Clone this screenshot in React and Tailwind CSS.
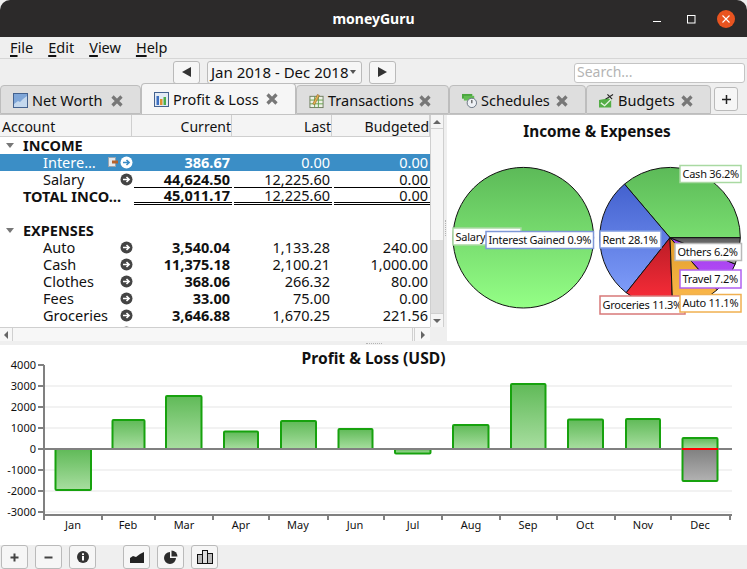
import React from 'react';

const FONT = '"Noto Sans", sans-serif';

const months = [
  ['Jan', 73], ['Feb', 128], ['Mar', 184], ['Apr', 241], ['May', 298], ['Jun', 355],
  ['Jul', 413], ['Aug', 471], ['Sep', 528], ['Oct', 585], ['Nov', 643], ['Dec', 700],
];
const xTicks = [44, 102, 155, 213, 269, 328, 384, 442, 500, 557, 615, 671, 730];
const yTicks = [[4000, 365], [3000, 386], [2000, 407], [1000, 428], [0, 449], [-1000, 470], [-2000, 491], [-3000, 512]];
const bars = [
  [55.5, 91, 449, 490], [112.5, 144.5, 420, 449], [166, 201.5, 396, 449], [224, 258, 431.5, 449],
  [281, 316, 421, 449], [338.5, 372.5, 429, 449], [395, 430.5, 449, 453.5], [453, 488.5, 425, 449],
  [511, 545.5, 384, 449], [568, 603, 419.5, 449], [626, 660, 419, 449],
];

const rows = [
  { type: 'group', name: 'INCOME' },
  { name: 'Intere…', cur: '386.67', last: '0.00', bud: '0.00', selected: true },
  { name: 'Salary', cur: '44,624.50', last: '12,225.60', bud: '0.00', line: 'single' },
  { type: 'total', name: 'TOTAL INCO…', cur: '45,011.17', last: '12,225.60', bud: '0.00', line: 'double' },
  { type: 'blank' },
  { type: 'group', name: 'EXPENSES' },
  { name: 'Auto', cur: '3,540.04', last: '1,133.28', bud: '240.00' },
  { name: 'Cash', cur: '11,375.18', last: '2,100.21', bud: '1,000.00' },
  { name: 'Clothes', cur: '368.06', last: '266.32', bud: '80.00' },
  { name: 'Fees', cur: '33.00', last: '75.00', bud: '0.00' },
  { name: 'Groceries', cur: '3,646.88', last: '1,670.25', bud: '221.56' },
];

const pieSlices = [
  ['url(#pGreen)', 0, 130.3], ['url(#pBlue)', 130.3, 231.5], ['url(#pRed)', 231.5, 272.2],
  ['url(#pOrange)', 272.2, 312.2], ['url(#pPurple)', 312.2, 338], ['url(#pGray)', 338, 360],
];

const pieLabels = [
  ['Salary', 453, 228, 68, 17, '#a9d9a2'],
  ['Interest Gained 0.9%', 486, 231.5, 107.5, 17, '#7f98d8'],
  ['Rent 28.1%', 600, 231, 61, 17, '#7f9be0'],
  ['Cash 36.2%', 680, 165.5, 61, 17, '#a9d9a2'],
  ['Others 6.2%', 675, 243.5, 66.5, 17, '#b8b8b8'],
  ['Travel 7.2%', 680, 270, 61, 18, '#b060f0'],
  ['Groceries 11.3%', 600, 296, 85, 18, '#d87878'],
  ['Auto 11.1%', 680, 294.5, 61, 17.5, '#f0b050'],
];

function slicePath(cx, cy, r, from, to) {
  const p = (a) => [cx + r * Math.cos((a * Math.PI) / 180), cy - r * Math.sin((a * Math.PI) / 180)];
  const [x1, y1] = p(from);
  const [x2, y2] = p(to);
  return `M${cx} ${cy}L${x1} ${y1}A${r} ${r} 0 ${to - from > 180 ? 1 : 0} 0 ${x2} ${y2}Z`;
}

const CloseX = () => (
  <svg width="12" height="12" viewBox="0 0 12 12" className="shrink-0">
    <path d="M1.5 1.5l9 9M10.5 1.5l-9 9" stroke="#777" strokeWidth="3.2" />
  </svg>
);

const NetWorthIcon = () => (
  <svg width="15" height="15" viewBox="0 0 15 15" className="shrink-0">
    <rect x="0.5" y="0.5" width="14" height="14" fill="#7fa6d8" stroke="#44628f" />
    <path d="M1 11l4-3 2 1 3-3 4-3v11H1z" fill="#c4d8ee" />
  </svg>
);

const ProfitIcon = () => (
  <svg width="15" height="15" viewBox="0 0 15 15" className="shrink-0">
    <rect x="0.5" y="0.5" width="14" height="14" fill="#e3ebf5" stroke="#44628f" />
    <rect x="2.5" y="4" width="2.5" height="9" fill="#3d6fc0" />
    <rect x="6" y="7" width="2.5" height="6" fill="#e09030" />
    <rect x="9.5" y="5" width="2.5" height="8" fill="#4cae4c" />
  </svg>
);

const TransIcon = () => (
  <svg width="15" height="16" viewBox="0 0 16 16" className="shrink-0">
    <rect x="1" y="3" width="14" height="12" fill="#eef3e6" stroke="#6d7a5c" />
    <path d="M1 7h14M1 11h14M6 3v12M10 3v12" stroke="#62a04c" />
    <path d="M4 11l5-10 2 1-5 10z" fill="#e6b450" stroke="#8a5a20" strokeWidth="0.6" />
  </svg>
);

const ScheduleIcon = () => (
  <svg width="15" height="16" viewBox="0 0 16 16" className="shrink-0">
    <rect x="0" y="0.5" width="11" height="5" fill="#4aa63e" />
    <rect x="2" y="2.5" width="11" height="5" fill="#62bc52" />
    <circle cx="10.5" cy="10" r="5" fill="#eef1f5" stroke="#66717f" />
    <path d="M10.5 7v3.5" stroke="#444" strokeWidth="1.2" />
  </svg>
);

const BudgetIcon = () => (
  <svg width="15" height="16" viewBox="0 0 16 16" className="shrink-0">
    <path d="M0 7l10-2 3 2v8H0z" fill="#54ad46" />
    <path d="M2 10l4 3 8-8" stroke="#e6f5e2" strokeWidth="1.4" fill="none" />
    <path d="M7 6l8-5M9 1l5 5" stroke="#222" strokeWidth="1.2" />
  </svg>
);

function Tab({ width, height, active, icon, label }) {
  return (
    <div
      className={`${width} ${height} flex items-center pl-[12px] pr-[17px] border border-[#bdbdbd] rounded-t-[4px] ${
        active ? 'bg-[#f6f6f6] border-b-0' : 'bg-[#dedede] pt-[2px]'
      }`}
    >
      {icon}
      <span className="ml-[4px] text-[14.5px] text-[#111]">{label}</span>
      <span className="ml-auto">
        <CloseX />
      </span>
    </div>
  );
}

function ToolBtn({ children, className = '' }) {
  return (
    <button className={`h-[24px] flex items-center justify-center bg-[#f6f6f6] border border-[#bababa] rounded-[3px] ${className}`}>
      {children}
    </button>
  );
}

const Arrow = ({ light }) => (
  <svg width="13" height="13" viewBox="0 0 13 13">
    <circle cx="6.5" cy="6.5" r="6" fill={light ? '#fff' : '#444'} />
    <path d="M3 6.5h6M6.5 4l2.6 2.5L6.5 9" stroke={light ? '#3a8cc6' : '#fff'} strokeWidth="1.6" fill="none" />
  </svg>
);

const Triangle = () => (
  <svg width="8" height="5" viewBox="0 0 8 5" className="shrink-0">
    <path d="M0 0h8L4 5z" fill="#777" />
  </svg>
);

function Amount({ value, bold, line }) {
  return (
    <div
      className={`h-[17px] flex items-center justify-end pr-[2px] ml-[2px] ${bold ? 'font-bold' : ''} ${
        line === 'single' ? 'border-b border-black' : ''
      } ${line === 'double' ? 'border-b-[3px] border-double border-black' : ''}`}
    >
      {value}
    </div>
  );
}

function Row({ row }) {
  if (row.type === 'blank') return <div className="h-[17px]" />;
  if (row.type === 'group') {
    return (
      <div className="h-[17px] flex items-center pl-[6px] font-bold text-[#111]">
        <Triangle />
        <span className="ml-[9px]">{row.name}</span>
      </div>
    );
  }
  const isTotal = row.type === 'total';
  return (
    <div
      className={`h-[17px] grid grid-cols-[132px_100px_100px_98px] items-center ${
        row.selected ? 'bg-[#3b8ec6] text-white' : 'text-[#111]'
      }`}
    >
      <div className={`relative h-[17px] flex items-center ${isTotal ? 'pl-[23px] font-bold' : 'pl-[43px]'}`}>
        <span className="whitespace-nowrap">{row.name}</span>
        {row.selected && (
          <svg width="11" height="11" viewBox="0 0 11 11" className="absolute left-[108px] top-[3px]">
            <rect x="0.5" y="0.5" width="7" height="9" fill="#e4e8ec" stroke="#9aa4ad" />
            <path d="M4 5h6" stroke="#b5622c" strokeWidth="3" />
          </svg>
        )}
        {!isTotal && (
          <span className="absolute left-[120px] top-[2px] flex">
            <Arrow light={row.selected} />
          </span>
        )}
      </div>
      <Amount value={row.cur} bold line={row.line} />
      <Amount value={row.last} line={row.line} />
      <Amount value={row.bud} line={row.line} />
    </div>
  );
}

function HeaderCell({ children, left }) {
  return (
    <div className={`h-[21px] pt-[2px] flex items-center border-r border-[#cfcfcf] text-[14px] text-[#111] ${left ? 'pl-[2px]' : 'justify-end'}`}>
      {children}
    </div>
  );
}

function PieChart() {
  return (
    <svg width="300" height="226" viewBox="447 115 300 226" className="block">
      <defs>
        <linearGradient id="pGreen" gradientUnits="userSpaceOnUse" x1="0" y1="167" x2="0" y2="308">
          <stop offset="0" stopColor="#5cba58" /><stop offset="1" stopColor="#94ff86" />
        </linearGradient>
        <linearGradient id="pBlue" gradientUnits="userSpaceOnUse" x1="0" y1="167" x2="0" y2="308">
          <stop offset="0" stopColor="#3a58c8" /><stop offset="1" stopColor="#86a4ff" />
        </linearGradient>
        <linearGradient id="pRed" gradientUnits="userSpaceOnUse" x1="0" y1="238" x2="0" y2="300">
          <stop offset="0" stopColor="#ba1c26" /><stop offset="1" stopColor="#f82c38" />
        </linearGradient>
        <linearGradient id="pOrange" gradientUnits="userSpaceOnUse" x1="0" y1="238" x2="0" y2="308">
          <stop offset="0" stopColor="#e09c28" /><stop offset="1" stopColor="#ffbc50" />
        </linearGradient>
        <linearGradient id="pPurple" gradientUnits="userSpaceOnUse" x1="0" y1="238" x2="0" y2="300">
          <stop offset="0" stopColor="#9a3ce8" /><stop offset="1" stopColor="#c454ff" />
        </linearGradient>
        <linearGradient id="pGray" gradientUnits="userSpaceOnUse" x1="0" y1="238" x2="0" y2="270">
          <stop offset="0" stopColor="#5c5c5c" /><stop offset="1" stopColor="#b4b4b4" />
        </linearGradient>
      </defs>
      <text x="597" y="137" textAnchor="middle" fontFamily={FONT} fontSize="15.3" fontWeight="700" fill="#111">Income &amp; Expenses</text>
      <circle cx="523.3" cy="237.7" r="70.3" fill="url(#pGreen)" stroke="#111" />
      {pieSlices.map(([fill, from, to]) => (
        <path key={from} d={slicePath(670, 237.7, 70.3, from, to)} fill={fill} stroke="#111" />
      ))}
      {pieLabels.map(([text, x, y, w, h, color]) => (
        <g key={text}>
          <rect x={x} y={y} width={w} height={h} fill="#fff" stroke={color} strokeWidth="1.5" />
          <text x={x + 2.5} y={y + h / 2 + 4} fontFamily={FONT} fontSize="11" letterSpacing="-0.25" fill="#111">{text}</text>
        </g>
      ))}
    </svg>
  );
}

function BarChart() {
  return (
    <svg width="747" height="200" viewBox="0 345 747 200" className="block">
      <defs>
        <linearGradient id="bGreen" x1="0" y1="0" x2="0" y2="1">
          <stop offset="0" stopColor="#60ba58" /><stop offset="1" stopColor="#a8dea0" />
        </linearGradient>
        <linearGradient id="bGray" x1="0" y1="0" x2="0" y2="1">
          <stop offset="0" stopColor="#808080" /><stop offset="1" stopColor="#b2b2b2" />
        </linearGradient>
      </defs>
      <text x="373.5" y="364" textAnchor="middle" fontFamily={FONT} fontSize="15.6" fontWeight="700" fill="#111">Profit &amp; Loss (USD)</text>
      {yTicks.filter(([v]) => v !== 0 && v !== 4000).map(([v, y]) => (
        <line key={v} x1="45" x2="732" y1={y} y2={y} stroke="#f2f2f2" strokeWidth="2" />
      ))}
      {bars.map(([x1, x2, top, bottom]) => (
        <rect key={x1} x={x1} y={top} width={x2 - x1} height={bottom - top} rx="1" fill="url(#bGreen)" stroke="#17a20e" strokeWidth="2" />
      ))}
      <rect x="682.5" y="438" width="35" height="11" rx="1" fill="url(#bGreen)" stroke="#17a20e" strokeWidth="2" />
      <rect x="682.5" y="449" width="35" height="32" rx="1" fill="url(#bGray)" stroke="#17a20e" strokeWidth="2" />
      <path d="M44 365V520M38 365H44M38 386H44M38 407H44M38 428H44M38 470H44M38 491H44M38 512H44" stroke="#808080" strokeWidth="2" fill="none" />
      <line x1="38" x2="732" y1="449" y2="449" stroke="#808080" strokeWidth="2" />
      <line x1="682" x2="718" y1="449" y2="449" stroke="#ff0000" strokeWidth="2" />
      <line x1="44" x2="732" y1="515" y2="515" stroke="#808080" strokeWidth="2" />
      {xTicks.map((x) => (
        <line key={x} x1={x} x2={x} y1="515" y2="520" stroke="#808080" strokeWidth="2" />
      ))}
      {yTicks.map(([v, y]) => (
        <text key={v} x="36" y={y + 4} textAnchor="end" fontFamily={FONT} fontSize="11" fill="#111">{v}</text>
      ))}
      {months.map(([m, x]) => (
        <text key={m} x={x} y="529" textAnchor="middle" fontFamily={FONT} fontSize="11" fill="#111">{m}</text>
      ))}
    </svg>
  );
}

const App = () => {
  return (
    <div className="w-[747px] h-[569px] overflow-hidden flex flex-col bg-[#efefef] text-[14px] leading-none" style={{ fontFamily: FONT }}>
      {/* Title bar */}
      <div className="h-[37px] shrink-0 flex items-center justify-center relative bg-[#2c2a2a] rounded-t-[10px]">
        <span className="text-white font-bold text-[14px]">moneyGuru</span>
        <div className="absolute right-[12px] top-[10px] flex items-center">
          <svg width="9" height="18" viewBox="0 0 9 18" className="mr-[25px]"><path d="M0 11.5h8" stroke="#fff" strokeWidth="1" /></svg>
          <svg width="9" height="9" viewBox="0 0 9 9" className="mr-[21px]"><rect x="0.5" y="0.5" width="7.5" height="7.5" fill="none" stroke="#fff" /></svg>
          <div className="w-[18px] h-[18px] rounded-full bg-[#e95420] flex items-center justify-center">
            <svg width="8" height="8" viewBox="0 0 8 8"><path d="M0.5 0.5l7 7M7.5 0.5l-7 7" stroke="#fff" strokeWidth="1.1" /></svg>
          </div>
        </div>
      </div>

      {/* Menu bar */}
      <div className="h-[22px] shrink-0 flex items-center gap-[15px] pl-[10px] border-b border-[#d6d6d6] text-[14.5px] text-[#111]">
        {['File', 'Edit', 'View', 'Help'].map((m) => (
          <span key={m}>
            <span className="underline decoration-[1.5px] underline-offset-2">{m[0]}</span>
            {m.slice(1)}
          </span>
        ))}
      </div>

      {/* Date range toolbar */}
      <div className="h-[25px] shrink-0 flex items-center pl-[173px] pr-[2px] pt-[1px]">
        <button className="w-[27px] h-[23px] flex items-center justify-center bg-[#f6f6f6] border border-[#bababa] rounded-[3px]">
          <svg width="9" height="10" viewBox="0 0 9 10"><path d="M9 0v10L0 5z" fill="#333" /></svg>
        </button>
        <div className="ml-[7px] w-[155px] h-[23px] flex items-center pl-[3px] bg-[#f6f6f6] border border-[#bababa] rounded-[3px] text-[15px] text-[#111] whitespace-nowrap">
          Jan 2018 - Dec 2018
          <svg width="6" height="4" viewBox="0 0 6 4" className="ml-auto mr-[5px]"><path d="M0 0h6L3 4z" fill="#555" /></svg>
        </div>
        <button className="ml-[7px] w-[27px] h-[23px] flex items-center justify-center bg-[#f6f6f6] border border-[#bababa] rounded-[3px]">
          <svg width="9" height="10" viewBox="0 0 9 10"><path d="M0 0v10l9-5z" fill="#333" /></svg>
        </button>
        <div className="ml-auto mt-[2px] pb-[2px] w-[171px] h-[20px] flex items-center pl-[2px] bg-white border border-[#c4c4c4] rounded-[3px] text-[14px] text-[#b4b4b4]">
          Search...
        </div>
      </div>

      {/* Tabs */}
      <div className="h-[31px] shrink-0 flex items-end border-b border-[#c4c4c4]">
        <Tab width="w-[141px]" height="h-[29px]" icon={<NetWorthIcon />} label="Net Worth" />
        <Tab width="w-[155px]" height="h-[31px]" active icon={<ProfitIcon />} label="Profit & Loss" />
        <Tab width="w-[153px]" height="h-[29px]" icon={<TransIcon />} label="Transactions" />
        <Tab width="w-[137px]" height="h-[29px]" icon={<ScheduleIcon />} label="Schedules" />
        <Tab width="w-[125px]" height="h-[29px]" icon={<BudgetIcon />} label="Budgets" />
        <div className="ml-[3px] mb-[3px] w-[24px] h-[24px] flex items-center justify-center bg-[#f6f6f6] border border-[#bababa] rounded-[3px]">
          <svg width="9" height="9" viewBox="0 0 9 9"><path d="M4.5 0v9M0 4.5h9" stroke="#222" strokeWidth="1.5" /></svg>
        </div>
      </div>

      {/* Sheet and pie */}
      <div className="h-[226px] shrink-0 flex">
        <div className="w-[444px] flex flex-col">
          <div className="h-[212px] flex">
            <div className="w-[430px] bg-white overflow-hidden">
              <div className="grid grid-cols-[132px_100px_100px_98px] bg-[#f4f4f4] border-b border-[#cfcfcf]">
                <HeaderCell left>Account</HeaderCell>
                <HeaderCell>Current</HeaderCell>
                <HeaderCell>Last</HeaderCell>
                <HeaderCell>Budgeted</HeaderCell>
              </div>
              <div className="text-[14.5px]">
                {rows.map((row, i) => (
                  <Row key={i} row={row} />
                ))}
                <div className="h-[3px] overflow-hidden relative">
                  <span className="absolute left-[120px] top-[2px] flex"><Arrow /></span>
                </div>
              </div>
            </div>
            <div className="w-[14px] flex flex-col bg-[#f5f5f5] border-x border-[#cfcfcf]">
              <div className="h-[14px] flex items-center justify-center border-b border-[#d0d0d0]">
                <svg width="8" height="4" viewBox="0 0 8 4"><path d="M4 0l4 4H0z" fill="#666" /></svg>
              </div>
              <div className="h-[111px]" />
              <div className="flex-1 bg-[#dedede]" />
              <div className="h-[14px] flex items-center justify-center border-t border-[#d0d0d0]">
                <svg width="8" height="4" viewBox="0 0 8 4"><path d="M0 0h8L4 4z" fill="#666" /></svg>
              </div>
            </div>
          </div>
          <div className="h-[14px] w-[430px] flex bg-[#f7f7f7] border-t border-[#cfcfcf]">
            <div className="w-[13px] flex items-center justify-center border-r border-[#d0d0d0]">
              <svg width="4" height="8" viewBox="0 0 4 8"><path d="M4 0v8L0 4z" fill="#666" /></svg>
            </div>
            <div className="flex-1" />
            <div className="w-[18px] flex items-center justify-center border-l-[3px] border-double border-[#d0d0d0]">
              <svg width="4" height="8" viewBox="0 0 4 8"><path d="M0 0v8l4-4z" fill="#666" /></svg>
            </div>
          </div>
        </div>
        <div className="w-[3px] flex flex-col items-center justify-center">
          <div className="w-[1px] h-[16px] border-l border-dotted border-[#b4b4b4]" />
        </div>
        <div className="flex-1 bg-white">
          <PieChart />
        </div>
      </div>

      {/* Splitter */}
      <div className="h-[4px] shrink-0 bg-[#efefef] flex items-center justify-center">
        <div className="w-[16px] h-[1px] border-t border-dotted border-[#b4b4b4]" />
      </div>

      {/* Bar chart */}
      <div className="h-[200px] shrink-0 bg-white">
        <BarChart />
      </div>

      {/* Bottom toolbar */}
      <div className="flex-1 flex items-start pl-[1px]">
        <ToolBtn className="w-[27px]">
          <svg width="9" height="9" viewBox="0 0 9 9"><path d="M4.5 0.5v8M0.5 4.5h8" stroke="#444" strokeWidth="2" /></svg>
        </ToolBtn>
        <ToolBtn className="w-[27px] ml-[7px]">
          <svg width="9" height="3" viewBox="0 0 9 3"><path d="M0.5 1.5h8" stroke="#444" strokeWidth="2" /></svg>
        </ToolBtn>
        <ToolBtn className="w-[27px] ml-[7px]">
          <svg width="12" height="12" viewBox="0 0 12 12">
            <circle cx="6" cy="6" r="6" fill="#333" />
            <rect x="5" y="5" width="2" height="4.5" fill="#fff" />
            <rect x="5" y="2.3" width="2" height="1.8" fill="#fff" />
          </svg>
        </ToolBtn>
        <ToolBtn className="w-[27px] ml-[27px]">
          <svg width="14" height="11" viewBox="0 0 14 11"><path d="M0 6l3-2 3 1 4-3 4-2v11H0z" fill="#222" /></svg>
        </ToolBtn>
        <ToolBtn className="w-[27px] ml-[7px]">
          <svg width="14" height="14" viewBox="0 0 14 14">
            <path d="M6 2a6 6 0 1 0 6 6H6z" fill="#2c2c2c" />
            <path d="M7.5 0.5a6 6 0 0 1 6 6h-6z" fill="#2c2c2c" />
          </svg>
        </ToolBtn>
        <ToolBtn className="w-[27px] ml-[7px]">
          <svg width="16" height="14" viewBox="0 0 16 14">
            <rect x="0.5" y="4.5" width="5" height="9" fill="#bbb" stroke="#111" />
            <rect x="5.5" y="0.5" width="5" height="13" fill="#ddd" stroke="#111" />
            <rect x="10.5" y="3.5" width="5" height="10" fill="#bbb" stroke="#111" />
          </svg>
        </ToolBtn>
      </div>
    </div>
  );
};

export default App;
